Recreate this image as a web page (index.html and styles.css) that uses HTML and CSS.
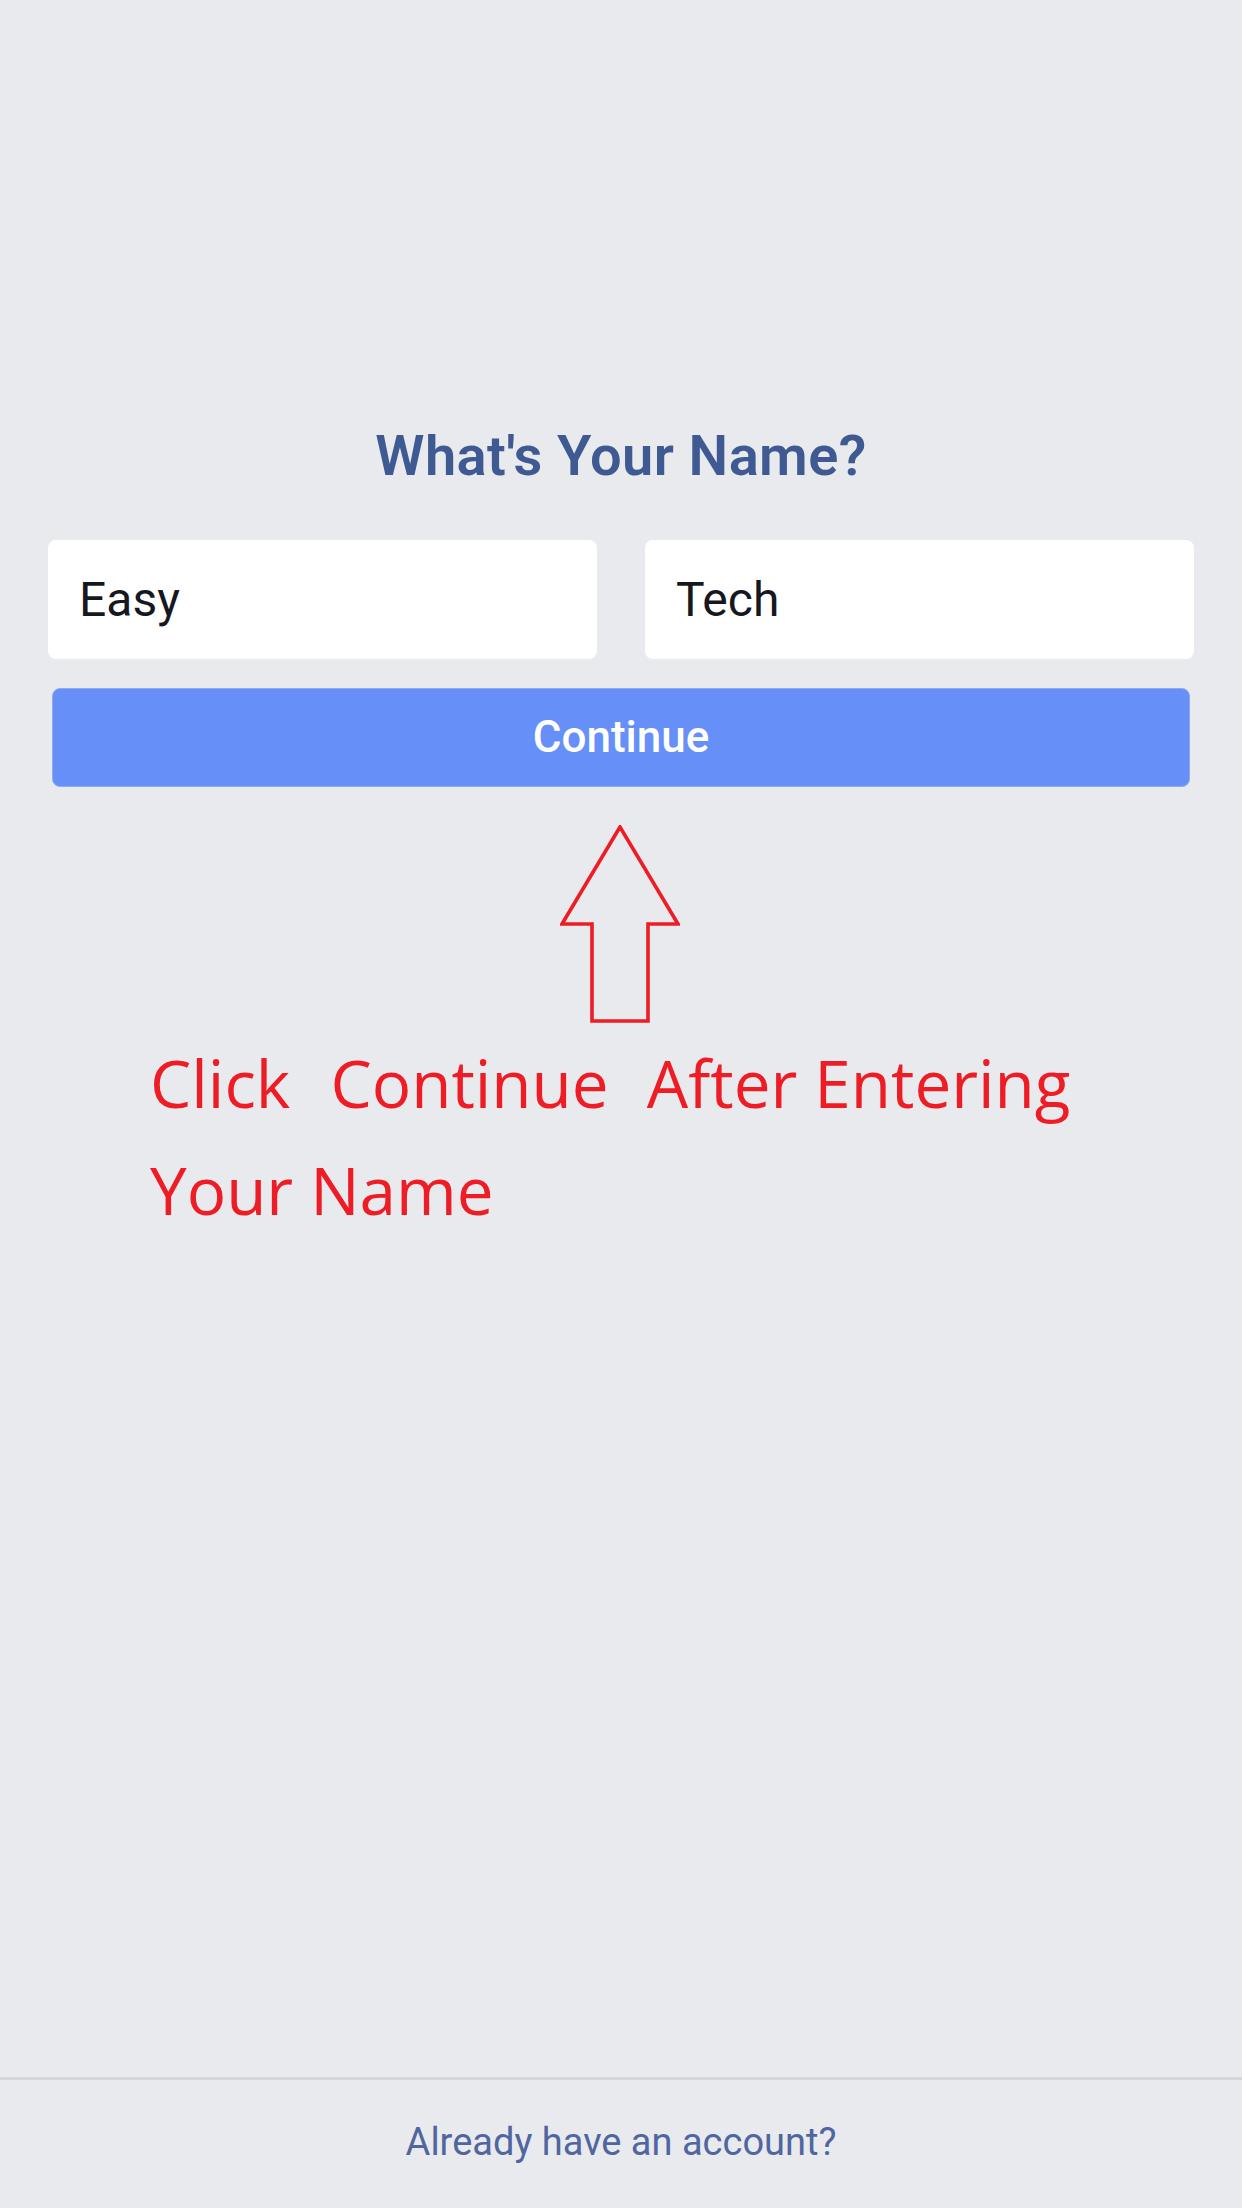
FILE: index.html
```html
<!DOCTYPE html>
<html lang="en">
<head>
<meta charset="utf-8">
<title>What's Your Name?</title>
<link rel="stylesheet" href="styles.css">
</head>
<body>
<div class="screen">
  <main class="form">
    <h1 class="title">What's Your Name?</h1>
    <div class="fields">
      <div class="field">Easy</div>
      <div class="field">Tech</div>
    </div>
    <button class="continue" type="button">Continue</button>
    <div class="annotation">
      <svg class="arrow" width="120" height="198" viewBox="0 0 120 198" aria-hidden="true">
        <polygon points="60,2 2,99 32,99 32,196 88,196 88,99 118,99" fill="none" stroke="#ee1c25" stroke-width="3.6" stroke-linejoin="miter"/>
      </svg>
      <p class="note">Click  <span class="quoted">Continue</span>  After Entering<br>Your Name</p>
    </div>
  </main>
  <footer class="footer">Already have an account?</footer>
</div>
</body>
</html>
```
FILE: styles.css
```css
* { box-sizing: border-box; }
html, body { margin: 0; padding: 0; }
body {
  background: #e9eaee;
  font-family: Roboto, "Liberation Sans", sans-serif;
}
.screen {
  width: 1242px;
  height: 2208px;
  display: flex;
  flex-direction: column;
  background: #e9eaee;
}
.form {
  flex: 1;
  display: flex;
  flex-direction: column;
  padding: 424px 48px 0;
}
.title {
  margin: 0;
  text-align: center;
  font-size: 56px;
  line-height: 64px;
  font-weight: 600;
  letter-spacing: 0.4px;
  color: #3f5a93;
}
.fields {
  margin-top: 52px;
  display: flex;
  gap: 48px;
}
.field {
  flex: 1;
  height: 119px;
  line-height: 119px;
  padding: 0 32px 0 31px;
  background: #ffffff;
  border-radius: 8px;
  font-size: 48px;
  color: #17171f;
}
.continue {
  margin: 29px 4px 0;
  height: 99px;
  padding: 0;
  border: 1px solid #8eaaf4;
  border-radius: 8px;
  background: #6690f8;
  color: #ffffff;
  font-family: Roboto, "Liberation Sans", sans-serif;
  font-size: 44px;
  font-weight: 500;
  line-height: 97px;
}
.annotation {
  display: flex;
  flex-direction: column;
}
.arrow {
  display: block;
  margin: 38px auto 0;
  position: relative;
  left: -1px;
}
.note {
  margin: 6px 0 0 102px;
  font-family: "Open Sans", "Noto Sans", sans-serif;
  font-size: 65.6px;
  line-height: 107px;
  color: #ee1c25;
  white-space: pre;
}
.quoted {
  margin: 0 4px 0 6px;
}
.footer {
  height: 131px;
  border-top: 3px solid #d5d6da;
  display: flex;
  align-items: center;
  justify-content: center;
  padding-bottom: 4px;
  font-size: 38px;
  color: #4f66a0;
}
```
